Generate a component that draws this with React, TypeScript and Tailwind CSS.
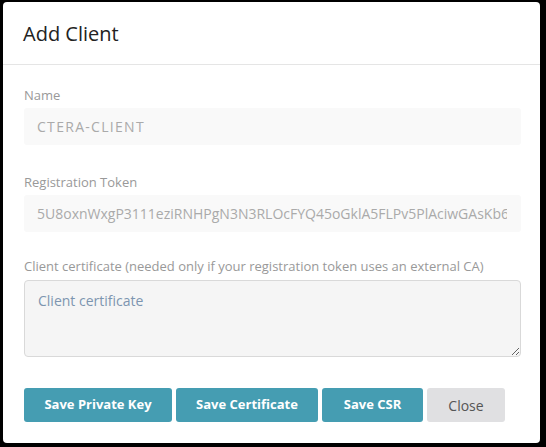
import React from 'react';

const token = '5U8oxnWxgP3111eziRNHPgN3N3RLOcFYQ45oGklA5FLPv5PlAciwGAsKb6Rz9QmT2xVdE7';

export default function App() {
  return (
    <div className="w-[546px] h-[447px] bg-black pl-[3px] pt-[2px] font-['Open_Sans',sans-serif]">
      <div className="w-[537px] h-[441px] bg-white rounded-[4px] flex flex-col">
        {/* Header */}
        <div className="h-[63px] border-b border-[#e5e5e5] flex items-center px-5">
          <h1 className="text-[20px] text-[#222] leading-none pt-[2px]">Add Client</h1>
        </div>

        {/* Body */}
        <div className="pl-[21px] pr-[19px] pt-5">
          <label className="block text-[13px] leading-5 text-[#999]">Name</label>
          <div className="mt-[3px] h-[37px] bg-[#f9f9f9] rounded-[3px] flex items-center px-[13px] text-[14px] tracking-[1.3px] text-[#aaa]">
            CTERA-CLIENT
          </div>

          <label className="block mt-[27px] text-[13px] leading-5 text-[#999]">Registration Token</label>
          <div className="mt-[3px] h-[37px] bg-[#f9f9f9] rounded-[3px] flex items-center pl-[13px] pr-[14px] text-[14px] text-[#aaa] overflow-hidden whitespace-nowrap">
            <span className="block overflow-hidden">{token}</span>
          </div>

          <label className="block mt-[24px] text-[13px] leading-5 text-[#999]">
            Client certificate (needed only if your registration token uses an external CA)
          </label>
          <textarea
            placeholder="Client certificate"
            className="block mt-[4px] w-full h-[77px] bg-[#f5f5f5] border border-[#d9d9d9] rounded-[4px] px-[13px] pt-[10px] pb-2 text-[14px] leading-5 placeholder:text-[#7d95b0] text-[#555] outline-none"
          />

          {/* Actions */}
          <div className="mt-[31px] flex gap-1">
            <button className="h-[34px] w-[148px] bg-[#459db2] text-white text-[13px] font-bold rounded-[3px]">
              Save Private Key
            </button>
            <button className="h-[34px] w-[142px] bg-[#459db2] text-white text-[13px] font-bold rounded-[3px]">
              Save Certificate
            </button>
            <button className="h-[34px] w-[101px] bg-[#459db2] text-white text-[13px] font-bold rounded-[3px]">
              Save CSR
            </button>
            <button className="h-[34px] w-[78px] bg-[#e0e0e2] text-[#555] text-[14px] rounded-[3px]">
              Close
            </button>
          </div>
        </div>
      </div>
    </div>
  );
}
